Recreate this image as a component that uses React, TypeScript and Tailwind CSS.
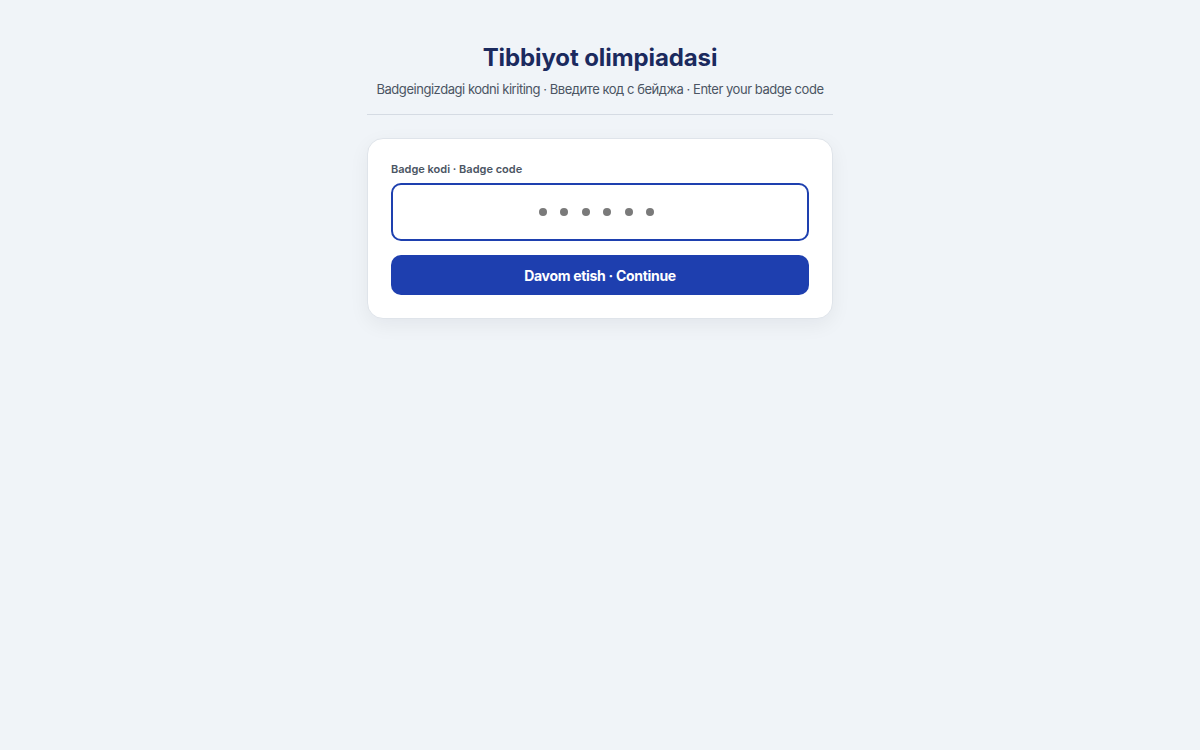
import React, { useState } from 'react';

export default function App() {
    const [code, setCode] = useState('');

    return (
        <div className="min-h-screen w-full bg-[#f0f4f8]" style={{ fontFamily: "Inter, 'Noto Sans', sans-serif" }}>
            <div className="mx-auto w-[466px] pt-[42px]">
                <div className="text-center">
                    <h1 className="text-[24px] leading-[32px] font-bold tracking-[-0.1px] text-[#1b2a5e]">Tibbiyot olimpiadasi</h1>
                    <p className="mt-[6px] whitespace-nowrap text-[13px] leading-[18px] tracking-[-0.46px] text-[#4b5563]">
                        Badgeingizdagi kodni kiriting · Введите код с бейджа · Enter your badge code
                    </p>
                </div>

                <div className="mt-[16px] h-px bg-[#d5dbe3]" />

                <div className="mt-[23px] bg-white border border-[#dfe4ea] rounded-[16px] shadow-[0_6px_20px_rgba(15,23,42,0.06)] px-[23px] pt-[23px] pb-[23px]">
                    <label className="block text-[11px] leading-[14px] font-semibold text-[#4b5563]">Badge kodi · Badge code</label>

                    <div className="relative mt-[7px] h-[58px] rounded-[10px] border-2 border-[#1e40af] bg-white">
                        <input
                            value={code}
                            onChange={e => setCode(e.target.value)}
                            className="absolute inset-0 w-full h-full bg-transparent text-center outline-none text-[18px] tracking-[8px] text-[#111827]"
                            type="password"
                            maxLength={6}
                        />
                        {code.length === 0 && (
                            <div className="pointer-events-none absolute inset-0 flex items-center justify-center gap-[13.5px] pr-[7px]">
                                {[0, 1, 2, 3, 4, 5].map(i => (
                                    <span key={i} className="block w-[8px] h-[8px] rounded-full bg-[#7a7a7a]" />
                                ))}
                            </div>
                        )}
                    </div>

                    <button className="mt-[14px] w-full h-[40px] rounded-[10px] bg-[#1e3faf] text-white text-[14px] font-bold tracking-[-0.3px]">
                        Davom etish · Continue
                    </button>
                </div>
            </div>
        </div>
    );
}
